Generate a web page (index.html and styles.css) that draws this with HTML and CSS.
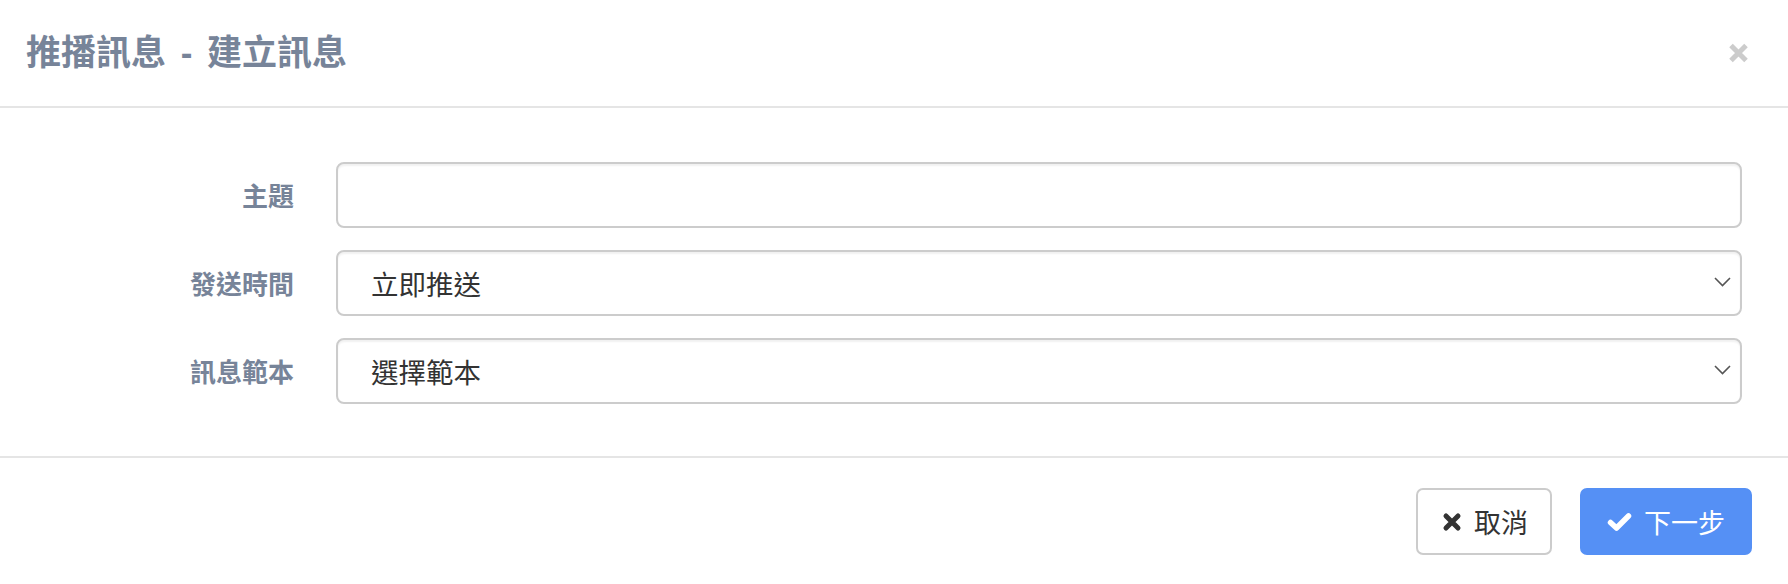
FILE: index.html
```html
<!DOCTYPE html>
<html lang="zh-Hant">
<head>
<meta charset="utf-8">
<title>推播訊息 - 建立訊息</title>
<link rel="stylesheet" href="styles.css">
</head>
<body>
<div class="modal">
  <div class="modal-header">
    <h4 class="modal-title">推播訊息 - 建立訊息</h4>
    <button class="close" type="button" aria-label="Close">
      <svg width="21" height="20" viewBox="0 0 21 20"><path d="M3 2.5 L18 17.5 M18 2.5 L3 17.5" stroke="#cccccc" stroke-width="5" fill="none"/></svg>
    </button>
  </div>
  <div class="modal-body">
    <form class="form">
      <div class="form-row">
        <label class="form-label">主題</label>
        <div class="form-control"></div>
      </div>
      <div class="form-row">
        <label class="form-label">發送時間</label>
        <div class="form-control select">
          <span>立即推送</span>
          <svg class="chevron" width="17" height="10" viewBox="0 0 17 10"><path d="M1 1 L8.5 8.5 L16 1" stroke="#555" stroke-width="1.6" fill="none"/></svg>
        </div>
      </div>
      <div class="form-row">
        <label class="form-label">訊息範本</label>
        <div class="form-control select">
          <span>選擇範本</span>
          <svg class="chevron" width="17" height="10" viewBox="0 0 17 10"><path d="M1 1 L8.5 8.5 L16 1" stroke="#555" stroke-width="1.6" fill="none"/></svg>
        </div>
      </div>
    </form>
  </div>
  <div class="modal-footer">
    <button class="btn btn-default" type="button">
      <svg class="btn-icon" width="20" height="20" viewBox="0 0 20 20"><path d="M4 4 L16 16 M16 4 L4 16" stroke="#333" stroke-width="5" stroke-linecap="round" fill="none"/></svg>
      <span>取消</span>
    </button>
    <button class="btn btn-primary" type="button">
      <svg class="btn-icon" width="25" height="20" viewBox="0 0 25 20"><path d="M3.5 10.5 L9.5 16 L21.5 4" stroke="#fff" stroke-width="5.5" stroke-linecap="round" stroke-linejoin="round" fill="none"/></svg>
      <span>下一步</span>
    </button>
  </div>
</div>
</body>
</html>
```

FILE: styles.css
```css
html, body {
  margin: 0;
  padding: 0;
  background: #ffffff;
}

body {
  font-family: "Noto Sans CJK TC", "Noto Sans", "Liberation Sans", sans-serif;
  width: 1788px;
  height: 584px;
  overflow: hidden;
}

.modal {
  display: flex;
  flex-direction: column;
  width: 1788px;
  height: 584px;
}

.modal-header {
  box-sizing: border-box;
  height: 108px;
  display: flex;
  align-items: center;
  justify-content: space-between;
  padding: 0 39px 0 26px;
  border-bottom: 2px solid #e5e5e5;
}

.modal-title {
  margin: 0;
  font-family: "Liberation Sans", "Noto Sans CJK TC", sans-serif;
  font-size: 35px;
  line-height: 40px;
  font-weight: 700;
  word-spacing: 5px;
  color: #778499;
}

.close {
  border: 0;
  background: transparent;
  padding: 0;
  margin: 0;
  display: flex;
  cursor: pointer;
}

.modal-body {
  box-sizing: border-box;
  height: 348px;
  padding: 54px 46px 52px 0;
}

.form {
  display: flex;
  flex-direction: column;
  gap: 22px;
}

.form-row {
  display: grid;
  grid-template-columns: 294px 1fr;
  column-gap: 42px;
  align-items: center;
}

.form-label {
  text-align: right;
  font-size: 26px;
  line-height: 32px;
  font-weight: 700;
  color: #778499;
}

.form-control {
  box-sizing: border-box;
  height: 66px;
  border: 2px solid #cccccc;
  border-radius: 8px;
  box-shadow: inset 0 2px 2px rgba(0, 0, 0, 0.06);
  background: #fff;
  padding: 0 9px 0 33px;
  font-size: 27.5px;
  color: #333333;
}

.select {
  display: flex;
  align-items: center;
  justify-content: space-between;
}

.select span {
  line-height: 34px;
}

.chevron {
  display: block;
  margin-bottom: 3px;
}

.modal-footer {
  box-sizing: border-box;
  height: 128px;
  border-top: 2px solid #e5e5e5;
  display: flex;
  justify-content: flex-end;
  align-items: flex-start;
  gap: 28px;
  padding: 30px 36px 0 0;
}

.btn {
  box-sizing: border-box;
  height: 67px;
  display: flex;
  align-items: center;
  gap: 12px;
  border-radius: 7px;
  font-family: "Noto Sans CJK TC", "Noto Sans", sans-serif;
  font-size: 27px;
  line-height: 34px;
  cursor: pointer;
}

.btn-icon {
  display: block;
}

.btn-default {
  width: 136px;
  padding: 0 0 0 24px;
  background: #ffffff;
  border: 2px solid #cccccc;
  color: #333333;
}

.btn-primary {
  width: 172px;
  padding: 0 0 0 25px;
  background: #5590f5;
  border: 2px solid #5590f5;
  color: #ffffff;
}
```
